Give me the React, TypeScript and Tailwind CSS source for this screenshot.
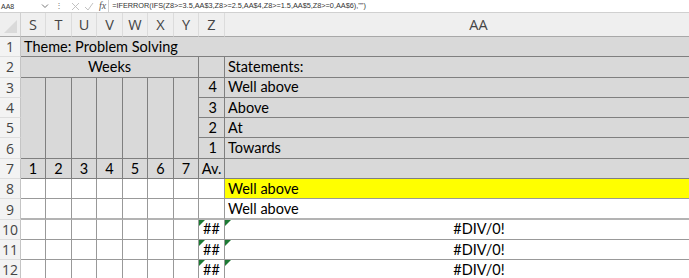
import React from "react";

const cols = ["S", "T", "U", "V", "W", "X", "Y", "Z", "AA"];

const cellFont = "font-['Lato',sans-serif] text-[14.5px] text-black";
const gray = "bg-[#d9d9d9]";
const bd = "border-[#7f7f7f]";
const wbd = "border-[#999]";

const Flag: React.FC = () => (
  <span className="absolute left-0 top-0 h-0 w-0 border-t-[6px] border-r-[6px] border-t-[#1d7a34] border-r-transparent" />
);

const RowHead: React.FC<{ n: number }> = ({ n }) => (
  <div className="flex items-center justify-center border-b border-r border-b-[#dedede] border-r-[#c4c4c4] bg-[#f3f3f3] font-['Open_Sans',sans-serif] text-[14px] text-[#444]">
    {n}
  </div>
);

const App: React.FC = () => {
  const weeks = [1, 2, 3, 4, 5, 6, 7];
  const levels = [
    { n: 4, t: "Well above" },
    { n: 3, t: "Above" },
    { n: 2, t: "At" },
    { n: 1, t: "Towards" },
  ];

  return (
    <div className="h-[278px] w-[689px] overflow-hidden bg-white">
      {/* Formula bar */}
      <div className="flex h-[13px] items-center border-b border-[#d0d0d0] bg-white font-['Liberation_Sans',sans-serif] text-[7px] text-[#333]">
        <div className="w-[38px] pl-[1px] leading-none">AA8</div>
        <svg width="8" height="6" viewBox="0 0 8 6" className="ml-[3px]">
          <path d="M1 1.5 L4 4.5 L7 1.5" fill="none" stroke="#777" strokeWidth="1" />
        </svg>
        <span className="ml-[6px] text-[8px] leading-none text-[#777]">⋮</span>
        <svg width="9" height="9" viewBox="0 0 9 9" className="ml-[8px]">
          <path d="M1 1 L8 8 M8 1 L1 8" fill="none" stroke="#bbb" strokeWidth="0.9" />
        </svg>
        <svg width="10" height="9" viewBox="0 0 10 9" className="ml-[4px]">
          <path d="M1 5 L4 8 L9 1" fill="none" stroke="#bbb" strokeWidth="0.9" />
        </svg>
        <span className="ml-[5px] font-['Liberation_Serif',serif] text-[10px] italic leading-none text-[#555]">fx</span>
        <div className="ml-[2px] flex h-full flex-1 items-center border-l border-[#d0d0d0] pl-[3px] text-[7.3px] whitespace-nowrap">
          =IFERROR(IFS(Z8&gt;=3.5,AA$3,Z8&gt;=2.5,AA$4,Z8&gt;=1.5,AA$5,Z8&gt;=0,AA$6),"")
        </div>
      </div>

      {/* Sheet */}
      <div className="grid w-[733px] grid-cols-[21px_25px_26px_25px_26px_25px_26px_25px_26px_508px] grid-rows-[24px_repeat(12,20.3px)]">
        {/* column header */}
        <div className="relative border-b border-r border-b-[#a8a8a8] border-r-[#d0d0d0] bg-[#efefef]">
          <span className="absolute bottom-[3px] right-[3px] h-0 w-0 border-b-[13px] border-l-[13px] border-b-[#dadada] border-l-transparent" />
        </div>
        {cols.map((c) => (
          <div
            key={c}
            className="flex items-center justify-center border-b border-r border-b-[#a8a8a8] border-r-[#dcdcdc] bg-[#efefef] font-['Open_Sans',sans-serif] text-[14.5px] text-[#444]"
          >
            {c}
          </div>
        ))}

        {/* row 1 */}
        <RowHead n={1} />
        <div className={`col-span-9 flex items-center border-b ${bd} ${gray} pl-[3px] ${cellFont}`}>
          Theme: Problem Solving
        </div>

        {/* row 2 */}
        <RowHead n={2} />
        <div className={`col-span-7 flex items-center justify-center border-b border-r ${bd} ${gray} ${cellFont}`}>
          Weeks
        </div>
        <div className={`border-b border-r ${bd} ${gray}`} />
        <div className={`flex items-center border-b ${bd} ${gray} pl-[3px] ${cellFont}`}>Statements:</div>

        {/* rows 3-6: week columns merged down */}
        {levels.map((l, i) => (
          <React.Fragment key={l.n}>
            <RowHead n={i + 3} />
            {i === 0 &&
              weeks.map((w) => (
                <div key={w} className={`row-span-4 border-b border-r ${bd} ${gray}`} />
              ))}
            <div className={`flex items-center justify-end border-b border-r ${bd} ${gray} pr-[7px] ${cellFont}`}>
              {l.n}
            </div>
            <div className={`flex items-center border-b ${bd} ${gray} pl-[3px] ${cellFont}`}>{l.t}</div>
          </React.Fragment>
        ))}

        {/* row 7 */}
        <RowHead n={7} />
        {weeks.map((w) => (
          <div key={w} className={`flex items-center justify-center border-b border-r ${bd} ${gray} ${cellFont}`}>
            {w}
          </div>
        ))}
        <div className={`flex items-center justify-center border-b border-r ${bd} ${gray} ${cellFont}`}>Av.</div>
        <div className={`border-b ${bd} ${gray}`} />

        {/* rows 8-12 */}
        {[8, 9, 10, 11, 12].map((r) => (
          <React.Fragment key={r}>
            <RowHead n={r} />
            {weeks.map((w) => (
              <div key={w} className={`border-r ${wbd} ${r === 9 ? "border-b-2 border-b-[#b3b3b3]" : "border-b"} bg-white`} />
            ))}
            <div
              className={`relative flex items-center justify-center border-r ${wbd} ${
                r === 9 ? "border-b-2 border-b-[#b3b3b3]" : "border-b"
              } bg-white ${cellFont}`}
            >
              {r >= 10 && (
                <>
                  <Flag />
                  ##
                </>
              )}
            </div>
            <div
              className={`relative flex items-center ${r === 9 ? "border-b-2 border-b-[#b3b3b3]" : `border-b ${wbd}`} ${
                r === 8 ? "bg-[#ffff00]" : "bg-white"
              } ${r >= 10 ? "justify-center" : "pl-[3px]"} ${cellFont}`}
            >
              {r <= 9 && "Well above"}
              {r >= 10 && (
                <>
                  <Flag />
                  #DIV/0!
                </>
              )}
            </div>
          </React.Fragment>
        ))}
      </div>
    </div>
  );
};

export default App;
